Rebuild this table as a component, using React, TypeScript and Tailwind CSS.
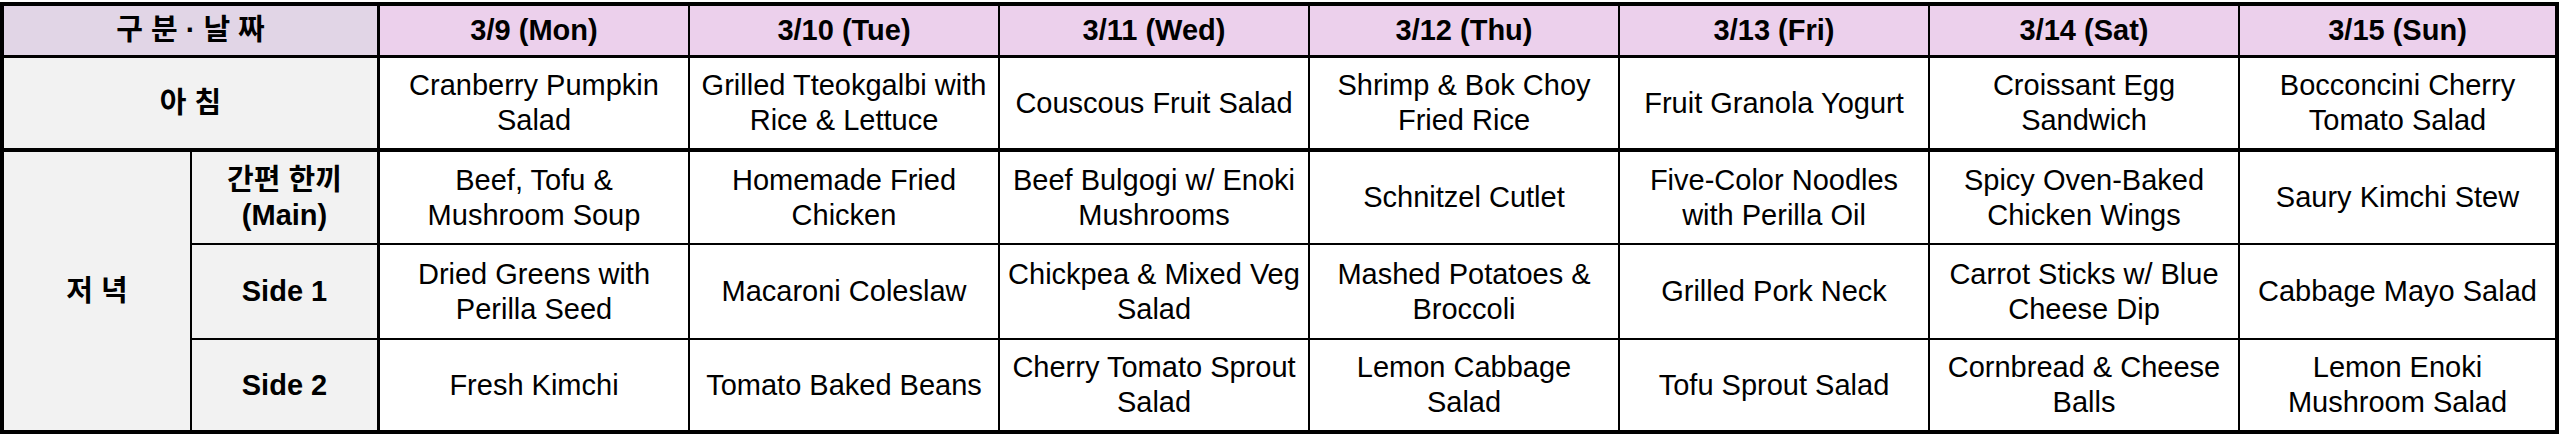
const days = [
  '3/9 (Mon)',
  '3/10 (Tue)',
  '3/11 (Wed)',
  '3/12 (Thu)',
  '3/13 (Fri)',
  '3/14 (Sat)',
  '3/15 (Sun)',
];

const breakfast = [
  ['Cranberry Pumpkin', 'Salad'],
  ['Grilled Tteokgalbi with', 'Rice & Lettuce'],
  ['Couscous Fruit Salad'],
  ['Shrimp & Bok Choy', 'Fried Rice'],
  ['Fruit Granola Yogurt'],
  ['Croissant Egg', 'Sandwich'],
  ['Bocconcini Cherry', 'Tomato Salad'],
];

const main = [
  ['Beef, Tofu &', 'Mushroom Soup'],
  ['Homemade Fried', 'Chicken'],
  ['Beef Bulgogi w/ Enoki', 'Mushrooms'],
  ['Schnitzel Cutlet'],
  ['Five-Color Noodles', 'with Perilla Oil'],
  ['Spicy Oven-Baked', 'Chicken Wings'],
  ['Saury Kimchi Stew'],
];

const side1 = [
  ['Dried Greens with', 'Perilla Seed'],
  ['Macaroni Coleslaw'],
  ['Chickpea & Mixed Veg', 'Salad'],
  ['Mashed Potatoes &', 'Broccoli'],
  ['Grilled Pork Neck'],
  ['Carrot Sticks w/ Blue', 'Cheese Dip'],
  ['Cabbage Mayo Salad'],
];

const side2 = [
  ['Fresh Kimchi'],
  ['Tomato Baked Beans'],
  ['Cherry Tomato Sprout', 'Salad'],
  ['Lemon Cabbage', 'Salad'],
  ['Tofu Sprout Salad'],
  ['Cornbread & Cheese', 'Balls'],
  ['Lemon Enoki', 'Mushroom Salad'],
];

const cell = 'flex flex-col items-center justify-center text-center';

function Lines({ lines }: { lines: string[] }) {
  return (
    <>
      {lines.map((l) => (
        <span key={l} className="whitespace-nowrap">
          {l}
        </span>
      ))}
    </>
  );
}

export default function App() {
  return (
    <div
      className="w-[2559px] h-[434px] bg-white text-black text-[29px] leading-[35px]"
      style={{ fontFamily: '"Liberation Sans", Arial, "Noto Sans CJK KR", sans-serif' }}
    >
      <div className="h-[2px] bg-white" />
      <div className="bg-black p-[4px] h-[432px]">
        <div className="grid grid-cols-[186px_185px_309px_308px_308px_308px_308px_308px_315px] grid-rows-[50px_90px_93px_93px_90px] gap-[2px] h-[424px]">
          {/* header row */}
          <div className={`${cell} col-span-2 mb-[1px] bg-[#e1d5e6] font-bold`}>구 분 · 날 짜</div>
          {days.map((d, i) => (
            <div
              key={d}
              className={`${cell} mb-[1px] bg-[#ecd0ec] font-bold ${i === 0 ? 'ml-[1px]' : ''}`}
            >
              {d}
            </div>
          ))}

          {/* breakfast */}
          <div className={`${cell} col-span-2 bg-[#f2f2f2] font-bold`}>아 침</div>
          {breakfast.map((b, i) => (
            <div key={i} className={`${cell} bg-white ${i === 0 ? 'ml-[1px]' : ''}`}>
              <Lines lines={b} />
            </div>
          ))}

          {/* dinner */}
          <div className={`${cell} row-span-3 mt-[2px] bg-[#f2f2f2] font-bold`}>저 녁</div>
          <div className={`${cell} mt-[2px] bg-[#f2f2f2] font-bold`}>
            <span>간편 한끼</span>
            <span>(Main)</span>
          </div>
          {main.map((m, i) => (
            <div key={i} className={`${cell} mt-[2px] bg-white ${i === 0 ? 'ml-[1px]' : ''}`}>
              <Lines lines={m} />
            </div>
          ))}

          <div className={`${cell} col-start-2 bg-[#f2f2f2] font-bold`}>Side 1</div>
          {side1.map((s, i) => (
            <div key={i} className={`${cell} bg-white ${i === 0 ? 'ml-[1px]' : ''}`}>
              <Lines lines={s} />
            </div>
          ))}

          <div className={`${cell} col-start-2 bg-[#f2f2f2] font-bold`}>Side 2</div>
          {side2.map((s, i) => (
            <div key={i} className={`${cell} bg-white ${i === 0 ? 'ml-[1px]' : ''}`}>
              <Lines lines={s} />
            </div>
          ))}
        </div>
      </div>
    </div>
  );
}
